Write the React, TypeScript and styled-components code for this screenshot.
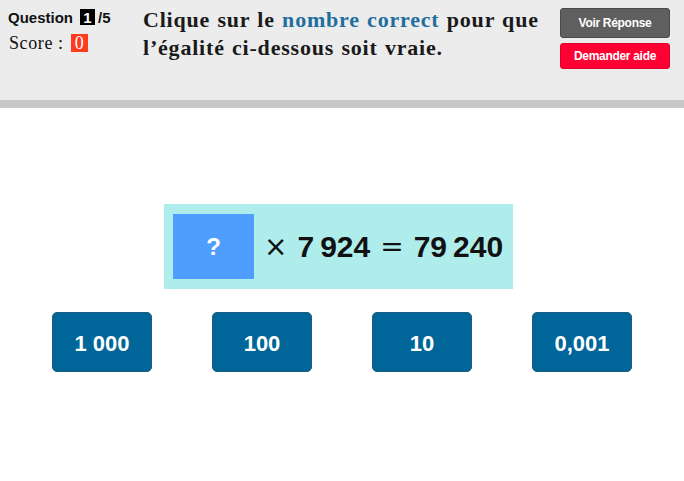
import React from "react";
import styled, { createGlobalStyle } from "styled-components";

const Global = createGlobalStyle`
  html, body { margin: 0; padding: 0; background: #ffffff; }
  body { width: 684px; height: 481px; overflow: hidden; font-family: "Liberation Sans", Arial, sans-serif; }
`;

const Page = styled.div`
  width: 684px;
  height: 481px;
  display: flex;
  flex-direction: column;
`;

const Header = styled.header`
  height: 100px;
  background: #ececec;
  border-bottom: 8px solid #c8c8c8;
  display: flex;
  align-items: flex-start;
`;

const Status = styled.div`
  width: 135px;
  padding: 8px 0 0 8px;
  display: flex;
  flex-direction: column;
  gap: 8px;
`;

const QuestionLine = styled.div`
  display: flex;
  align-items: center;
  font-family: "Liberation Sans", Arial, sans-serif;
  font-weight: bold;
  font-size: 15px;
  color: #111;
  height: 18px;
`;

const Badge = styled.span<{ $bg: string; $serif?: boolean }>`
  display: inline-flex;
  align-items: center;
  justify-content: center;
  background: ${(p) => p.$bg};
  color: #fff;
  height: ${(p) => (p.$serif ? "18px" : "16px")};
  min-width: ${(p) => (p.$serif ? "17px" : "15px")};
  padding: 0 1px;
  box-sizing: border-box;
  font-family: ${(p) => (p.$serif ? '"Liberation Serif", serif' : '"Liberation Sans", sans-serif')};
  font-weight: ${(p) => (p.$serif ? "normal" : "bold")};
  font-size: ${(p) => (p.$serif ? "18px" : "15px")};
  letter-spacing: 0;
  margin-left: 7px;
  margin-right: 3px;
`;

const ScoreLine = styled.div`
  display: flex;
  align-items: center;
  font-family: "Liberation Serif", serif;
  font-size: 18px;
  letter-spacing: 0.6px;
  color: #111;
  height: 18px;
  padding-left: 1px;
`;

const Instruction = styled.p`
  flex: 1;
  margin: 0;
  padding-top: 6px;
  font-family: "Liberation Serif", "DejaVu Serif", serif;
  font-weight: bold;
  font-size: 22px;
  line-height: 28px;
  letter-spacing: 0.8px;
  word-spacing: 1px;
  color: #1a1a1a;
`;

const Highlight = styled.span`
  color: #1f6f9e;
`;

const Actions = styled.div`
  width: 110px;
  margin: 8px 14px 0 0;
  display: flex;
  flex-direction: column;
  gap: 5px;
`;

const ActionButton = styled.button<{ $bg: string; $border: string; $h: number }>`
  height: ${(p) => p.$h}px;
  width: 110px;
  background: ${(p) => p.$bg};
  border: 1px solid ${(p) => p.$border};
  border-radius: 3px;
  color: #fff;
  font-family: "Liberation Sans", Arial, sans-serif;
  font-weight: bold;
  font-size: 12px;
  letter-spacing: -0.3px;
  padding: 0;
  cursor: pointer;
`;

const Main = styled.main`
  flex: 1;
  display: flex;
  flex-direction: column;
  align-items: center;
  padding-top: 96px;
`;

const Equation = styled.div`
  display: flex;
  align-items: center;
  background: #afeded;
  padding: 9px;
  width: 349px;
  height: 85px;
  box-sizing: border-box;
  margin-left: -7px;
`;

const Blank = styled.div`
  width: 81px;
  height: 65px;
  background: #4f9dff;
  color: #fff;
  display: flex;
  align-items: center;
  justify-content: center;
  font-family: "Liberation Sans", Arial, sans-serif;
  font-weight: bold;
  font-size: 24px;
`;

const Expr = styled.div`
  margin-left: 10px;
  display: flex;
  align-items: center;
  font-family: "Liberation Sans", Arial, sans-serif;
  font-weight: bold;
  font-size: 30px;
  color: #111;
  gap: 10px;
`;

const Op = styled.span`
  font-weight: normal;
  font-family: "DejaVu Sans", sans-serif;
  font-size: 28px;
`;

const Choices = styled.div`
  margin-top: 23px;
  display: grid;
  grid-template-columns: repeat(4, 160px);
  justify-items: center;
`;

const Choice = styled.button`
  width: 100px;
  height: 60px;
  background: #006699;
  border: 1px solid #1b5c82;
  border-radius: 5px;
  color: #fff;
  font-family: "Liberation Sans", Arial, sans-serif;
  font-weight: bold;
  font-size: 22px;
  padding: 4px 0 0;
  cursor: pointer;
`;

const choices = ["1\u00a0000", "100", "10", "0,001"];

export default function App() {
  return (
    <Page>
      <Global />
      <Header>
        <Status>
          <QuestionLine>
            Question<Badge $bg="#000">1</Badge>/5
          </QuestionLine>
          <ScoreLine>
            Score&nbsp;:<Badge $bg="#ff3b1f" $serif>0</Badge>
          </ScoreLine>
        </Status>
        <Instruction>
          Clique sur le <Highlight>nombre correct</Highlight> pour que l’égalité ci-dessous soit vraie.
        </Instruction>
        <Actions>
          <ActionButton $bg="#5f5f5f" $border="#4a4a4a" $h={30}>Voir Réponse</ActionButton>
          <ActionButton $bg="#ff0033" $border="#e0002c" $h={26}>Demander aide</ActionButton>
        </Actions>
      </Header>
      <Main>
        <Equation>
          <Blank>?</Blank>
          <Expr>
            <Op>×</Op>
            <span>7&#8239;924</span>
            <Op>=</Op>
            <span>79&#8239;240</span>
          </Expr>
        </Equation>
        <Choices>
          {choices.map((c) => (
            <Choice key={c}>{c}</Choice>
          ))}
        </Choices>
      </Main>
    </Page>
  );
}
